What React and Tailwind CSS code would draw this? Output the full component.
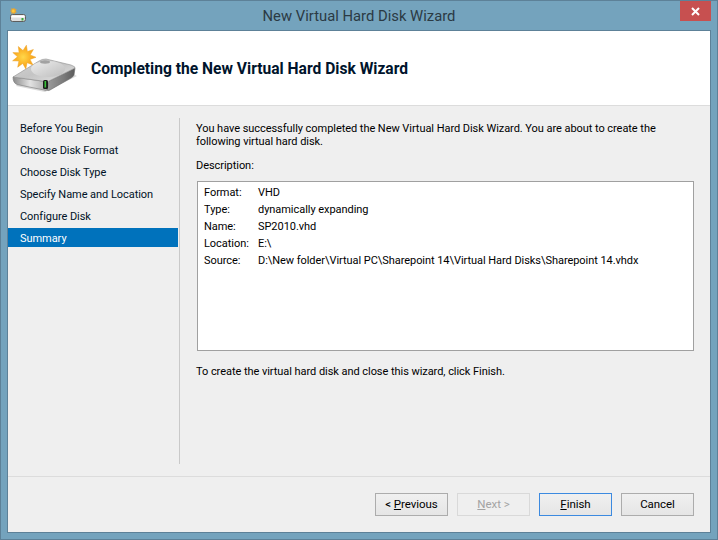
import React from 'react';

const steps = ['Before You Begin', 'Choose Disk Format', 'Choose Disk Type', 'Specify Name and Location', 'Configure Disk', 'Summary'];

const details = [
    ['Format:', 'VHD'],
    ['Type:', 'dynamically expanding'],
    ['Name:', 'SP2010.vhd'],
    ['Location:', 'E:\\'],
    ['Source:', 'D:\\New folder\\Virtual PC\\Sharepoint 14\\Virtual Hard Disks\\Sharepoint 14.vhdx'],
];

const Star = ({ cx, cy, r, inner, points: count = 10 }) => {
    const points = [];
    for (let i = 0; i < count * 2; i++) {
        const rad = i % 2 === 0 ? r : inner;
        const a = (Math.PI * i) / count + 0.2;
        points.push(`${(cx + rad * Math.sin(a)).toFixed(1)},${(cy - rad * Math.cos(a)).toFixed(1)}`);
    }
    return <polygon points={points.join(' ')} fill="url(#sun)" stroke="#eda52a" strokeWidth="0.5" />;
};

const DiskIcon = () => (
    <svg width="68" height="56" viewBox="0 0 68 56">
        <defs>
            <radialGradient id="sun" cx="45%" cy="50%" r="55%">
                <stop offset="0" stopColor="#ffd84a" />
                <stop offset="0.6" stopColor="#fbb024" />
                <stop offset="1" stopColor="#f59c1a" />
            </radialGradient>
            <linearGradient id="top" x1="0" y1="0" x2="1" y2="1">
                <stop offset="0" stopColor="#d4d4d4" />
                <stop offset="0.5" stopColor="#c4c4c4" />
                <stop offset="1" stopColor="#e4e4e4" />
            </linearGradient>
            <linearGradient id="left" x1="0" y1="0" x2="1" y2="0">
                <stop offset="0" stopColor="#8a8a8a" />
                <stop offset="0.5" stopColor="#e2e2e2" />
                <stop offset="1" stopColor="#a8a8a8" />
            </linearGradient>
            <linearGradient id="right" x1="0" y1="0" x2="1" y2="0">
                <stop offset="0" stopColor="#9c9c9c" />
                <stop offset="0.6" stopColor="#7a7a7a" />
                <stop offset="1" stopColor="#5a5a5a" />
            </linearGradient>
            <linearGradient id="disc" x1="0" y1="0" x2="1" y2="1">
                <stop offset="0" stopColor="#eeeeee" />
                <stop offset="1" stopColor="#bcbcbc" />
            </linearGradient>
        </defs>
        <path d="M5 46 L34 52 L66 36 L60 33 L10 40 Z" fill="#b8b8b8" opacity="0.5" />
        <path d="M38 41 L64 28 L63 35 Q62 37 60 38 L39 50 Q37 51 36 50 Z" fill="url(#right)" stroke="#6a6a6a" strokeWidth="0.6" />
        <path d="M2 37 L31 41 Q34 42 36 42 L36 50 Q35 51 33 50 L6 44.5 Q2 43 2 37 Z" fill="url(#left)" stroke="#777777" strokeWidth="0.6" />
        <path d="M2 37 L28 21 Q31 19 35 19 L60 25 Q65 27 64 28 L38 41 Q35 42 31 41 Z" fill="url(#top)" stroke="#8f8f8f" strokeWidth="0.6" />
        <ellipse cx="37" cy="29" rx="17" ry="8" fill="url(#disc)" />
        <ellipse cx="34" cy="22" rx="5" ry="1.7" fill="#a2a2a2" />
        <rect x="32" y="40" width="5" height="9" rx="1.5" fill="#1c1c1c" />
        <rect x="33.5" y="41" width="1.6" height="6.5" fill="#37c137" />
        <Star cx={13} cy={17} r={12} inner={6.5} points={9} />
    </svg>
);

const TitleIcon = () => (
    <svg width="17" height="14" viewBox="0 0 17 14">
        <rect x="0.5" y="6.5" width="15" height="7" rx="2" fill="#dedede" stroke="#5d5d5d" />
        <rect x="1.5" y="7.5" width="13" height="2" fill="#ffffff" />
        <rect x="11.5" y="10" width="2" height="2.5" fill="#38a838" />
        <Star cx={3.5} cy={3} r={3.2} inner={1.8} points={7} />
    </svg>
);

const WizardButton = ({ children, disabled, focused }) => (
    <button
        className={`w-[73px] h-[23px] border leading-none text-[11.5px] ${
            disabled
                ? 'border-[#d9d9d9] bg-[#efefef] text-[#a3a3a3]'
                : focused
                  ? 'border-[#3c8ae0] bg-gradient-to-b from-[#f0f0f0] to-[#e5e5e5] text-black'
                  : 'border-[#acacac] bg-gradient-to-b from-[#f0f0f0] to-[#e5e5e5] text-black'
        }`}
    >
        {children}
    </button>
);

export default function App() {
    return (
        <div className="w-[718px] h-[540px] flex flex-col bg-[#74a3bd] border border-[#5d8198] overflow-hidden text-[11px] tracking-[-0.05px] text-black font-['Roboto',sans-serif]">
            <div className="h-[29px] shrink-0 grid grid-cols-[1fr_auto_1fr]">
                <div className="pl-[9px] pt-[7px]">
                    <TitleIcon />
                </div>
                <div className="text-[14.8px] tracking-normal leading-[30px] text-[#2b3a44]">New Virtual Hard Disk Wizard</div>
                <div className="flex justify-end pr-[6px]">
                    <div className="w-[31px] h-[20px] bg-[#c75050] flex items-center justify-center">
                        <svg width="9" height="9" viewBox="0 0 9 9">
                            <path d="M1 1 L8 8 M8 1 L1 8" stroke="#ffffff" strokeWidth="2" />
                        </svg>
                    </div>
                </div>
            </div>

            <div className="flex-1 flex flex-col mx-[6px] mb-[6px] border border-[#5d8198] min-h-0">
                <div className="h-[75px] shrink-0 bg-white border-b border-[#dcdcdc] flex items-center">
                    <div className="w-[83px] pl-[3px] shrink-0">
                        <DiskIcon />
                    </div>
                    <div className="text-[15.6px] tracking-normal mt-[3px] font-bold text-[#00142c]">Completing the New Virtual Hard Disk Wizard</div>
                </div>

                <div className="flex-1 bg-[#efefef] flex flex-col min-h-0">
                    <div className="flex h-[370px] shrink-0 pt-[12px]">
                        <div className="w-[170px] shrink-0 flex flex-col">
                            {steps.map((step, index) => (
                                <div
                                    key={step}
                                    className={`h-[19px] mb-[3px] pl-[12px] leading-[21px] whitespace-nowrap ${
                                        index === 5 ? 'bg-[#0072bc] text-white' : 'text-[#001226]'
                                    }`}
                                >
                                    {step}
                                </div>
                            ))}
                        </div>
                        <div className="w-px h-[346px] ml-[1px] bg-[#c9c9c9] shrink-0" />
                        <div className="ml-[16px] w-[498px] shrink-0">
                            <p className="leading-[13px] mt-[4px] whitespace-nowrap">
                                You have successfully completed the New Virtual Hard Disk Wizard. You are about to create the
                                <br />
                                following virtual hard disk.
                            </p>
                            <p className="leading-[15px] mt-[10px]">Description:</p>
                            <div className="mt-[8px] ml-[1px] w-[497px] h-[170px] bg-white border border-[#a0a0a0] pl-[6px] pt-[2px]">
                                {details.map(([label, value]) => (
                                    <div key={label} className="flex h-[17px] leading-[17px] whitespace-nowrap">
                                        <span className="w-[54px] shrink-0">{label}</span>
                                        <span>{value}</span>
                                    </div>
                                ))}
                            </div>
                            <p className="mt-[13px] leading-[15px]">To create the virtual hard disk and close this wizard, click Finish.</p>
                        </div>
                    </div>

                    <div className="flex-1 border-t border-[#dcdcdc] flex justify-end items-start gap-[9px] pt-[16px] pr-[16px]">
                        <WizardButton>&lt; <span className="underline">P</span>revious</WizardButton>
                        <WizardButton disabled><span className="underline">N</span>ext &gt;</WizardButton>
                        <WizardButton focused><span className="underline">F</span>inish</WizardButton>
                        <WizardButton>Cancel</WizardButton>
                    </div>
                </div>
            </div>
        </div>
    );
}
